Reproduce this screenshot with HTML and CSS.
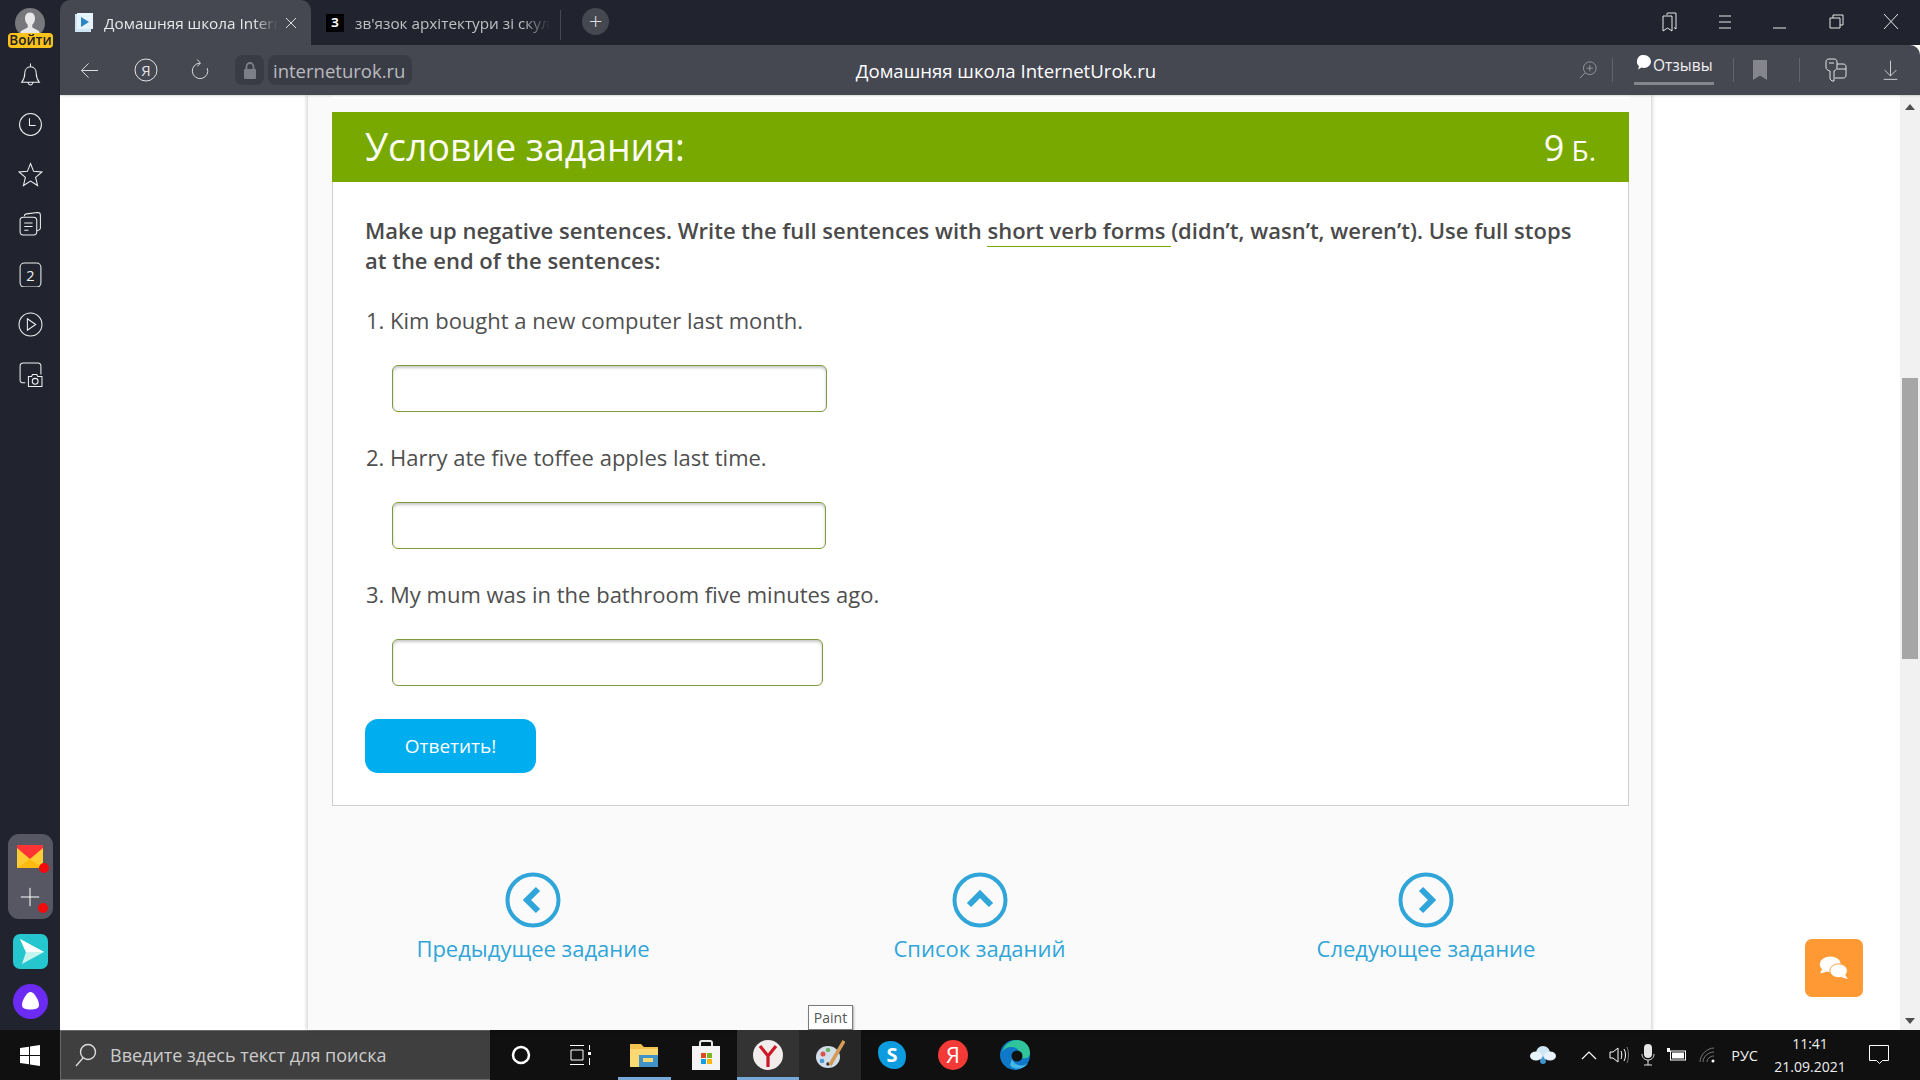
FILE: index.html
```html
<!DOCTYPE html>
<html lang="ru">
<head>
<meta charset="utf-8">
<title>Домашняя школа InternetUrok.ru</title>
<link rel="stylesheet" href="styles.css">
</head>
<body>
<div class="screen">
  <div class="shell">
    <aside class="sidebar">
      <div class="profile">
        <svg width="30" height="30" viewBox="0 0 26 26"><circle cx="13" cy="13" r="13" fill="#77787c"/><path d="M13 4c3 0 4.500 2.500 4.300 5.500-.2 2.500-1.300 4-2.300 5v2.500l5 2.500c1 .5 1.500 1.500 1.500 3.500h-17c0-2 .5-3 1.500-3.500l5-2.500v-2.500c-1-1-2.100-2.500-2.300-5C8.500 6.500 10 4 13 4z" fill="#e8e8e8"/></svg>
        <span class="login">Войти</span>
      </div>
      <div class="side-icons">
        <svg class="si" viewBox="0 0 24 24"><path d="M12 1.500v3M12 4.500c-3.500 0-5.500 3-5.500 6.500 0 4-1 6-3 8.500h17c-2-2.500-3-4.500-3-8.500 0-3.500-2-6.500-5.500-6.500zM9.500 19.500c.5 1.500 1.300 2.500 2.500 2.500s2-1 2.500-2.500"/></svg>
        <svg class="si" viewBox="0 0 24 24"><circle cx="12" cy="12" r="10.500"/><path d="M11 6v7h6"/></svg>
        <svg class="si" viewBox="0 0 24 24"><path d="M12 1.500l3 7.500 8 .6-6.100 5.200 1.900 7.800-6.800-4.200-6.800 4.200 1.900-7.800L1 9.600l8-.6z"/></svg>
        <svg class="si" viewBox="0 0 24 24"><rect x="2" y="5" width="16" height="17" rx="3"/><path d="M6 4c0-1.500 1-2 2-2.200l11-1.300c1.500 0 2.500 1 2.500 2.500v12c0 1.500-1 2.500-3.500 3M6 10.500h8M6 14h8M6 17.500h4"/></svg>
        <svg class="si" viewBox="0 0 24 24"><rect x="2" y="1" width="20" height="23" rx="4"/><text x="12" y="18" class="si-text">2</text></svg>
        <svg class="si" viewBox="0 0 24 24"><circle cx="12" cy="12" r="11"/><path d="M9 6.500l8 5.500-8 5.500z"/></svg>
        <svg class="si" viewBox="0 0 24 24"><path d="M12 1h7c2 0 3 1 3 3v8M2 12V4c0-2 1-3 3-3h7M2 12v5c0 2 1 3 3 3h2M10 14h3l1-2h4l1 2h4v9.500H10z"/><circle cx="16.500" cy="18.500" r="2.800"/></svg>
      </div>
      <div class="side-apps">
        <div class="app-group">
          <span class="app-cell">
            <svg width="30" height="23" viewBox="0 0 26 23"><rect width="26" height="23" fill="#fc3"/><path d="M0 0h26v3L13 14 0 3z" fill="#f33"/><path d="M0 23l13-9 13 9z" fill="#fb1"/></svg>
            <i class="dot"></i>
          </span>
          <span class="app-cell cross">
            <svg width="20" height="20" viewBox="0 0 24 24"><path d="M12 1v22M1 12h22" stroke="#fff" stroke-width="1.200" fill="none"/></svg>
            <i class="dot"></i>
          </span>
        </div>
        <svg class="send" width="35" height="35" viewBox="0 0 35 35"><rect width="35" height="35" rx="7" fill="#26c6ce"/><path d="M7 5l24 13L9 30l4-12z" fill="#c9f5f1"/><path d="M7 5l6 13h18z" fill="#fff"/></svg>
        <svg class="alice" width="35" height="35" viewBox="0 0 35 35"><circle cx="17.500" cy="17.500" r="17.500" fill="#6b2bf2"/><path d="M17.500 8c3.500 0 8.500 8 8.500 13 0 3.500-3.500 4.500-8.500 4.500S9 24.500 9 21c0-5 5-13 8.500-13z" fill="#fff"/></svg>
      </div>
    </aside>

    <div class="browser">
      <header class="tabstrip">
        <div class="tab tab-active">
          <svg width="18" height="20" viewBox="0 0 18 20"><rect x="0" y="1" width="16" height="18" fill="#cfe6f2"/><rect x="2" y="0" width="16" height="16" fill="#e6f3fa"/><path d="M6 4l8 5-8 5z" fill="#2a86c4"/></svg>
          <span class="tab-title">Домашняя школа Intern</span>
          <svg class="tab-close" width="12" height="12" viewBox="0 0 12 12"><path d="M1 1l10 10M11 1L1 11" stroke="#ddd" fill="none"/></svg>
        </div>
        <div class="tab tab-idle">
          <span class="fav-z">З</span>
          <span class="tab-title">зв'язок архітектури зі скул</span>
        </div>
        <span class="tab-div"></span>
        <span class="tab-plus">+</span>
        <div class="win-controls">
          <svg class="wi" viewBox="0 0 20 20"><path d="M8 3l0-1.500c0-.5.500-.5.500-.5H17v16l-2-1.500M4 4h9v15l-4.500-3L4 19z"/></svg>
          <svg class="wi" viewBox="0 0 20 20"><path d="M4 4h12M4 10h12M4 16h12"/></svg>
          <svg class="wi" viewBox="0 0 20 20"><path d="M3 16h13"/></svg>
          <svg class="wi" viewBox="0 0 20 20"><path d="M4 6h10v10H4zM7 6V3h10v10h-3"/></svg>
          <svg class="wi" viewBox="0 0 20 20"><path d="M3 2l14 15M17 2L3 17"/></svg>
        </div>
      </header>

      <nav class="toolbar">
        <div class="tb-left">
          <svg class="ti back" viewBox="0 0 20 20"><path d="M19 10H2M9 2.500L1.500 10 9 17.500"/></svg>
          <svg class="ti ya" viewBox="0 0 24 24"><circle cx="12" cy="12" r="11"/><text x="12" y="18" class="ya-text">Я</text></svg>
          <svg class="ti reload" viewBox="0 0 22 24"><path d="M11 4.500a8.500 8.500 0 1 0 8 5.500M8 .5l3.500 4-3.500 3.500"/></svg>
          <span class="lockbox"><svg width="12" height="17" viewBox="0 0 12 17"><path d="M2.500 7V4.500a3.500 3.500 0 0 1 7 0V7" fill="none" stroke="#7d7f88" stroke-width="1.800"/><rect y="7" width="12" height="10" rx="1" fill="#7d7f88"/></svg></span>
          <span class="urlbox">interneturok.ru</span>
        </div>
        <div class="tb-title">Домашняя школа InternetUrok.ru</div>
        <div class="tb-right">
          <svg class="ti zoomi" viewBox="0 0 22 22"><circle cx="13" cy="9" r="7"/><path d="M9.500 9h7M13 5.500v7M8 14l-6 6"/></svg>
          <span class="tb-div tb-div1"></span>
          <span class="reviews"><svg width="14" height="15" viewBox="0 0 14 15"><path d="M7 0a7 6.500 0 0 1 0 13c-1 0-2-.2-2.500-.4L1 14.500l1-3.300A6.500 6.500 0 0 1 7 0z" fill="#fff"/></svg>Отзывы</span>
          <span class="tb-div tb-div2"></span>
          <svg class="bm" width="14" height="20" viewBox="0 0 14 20"><path d="M0 0h14v20l-7-4.500L0 20z" fill="#85868d"/></svg>
          <span class="tb-div tb-div3"></span>
          <svg class="ti key" viewBox="0 0 24 26"><path d="M2 5c0-2 1-3 3-3h5c2 0 3 1 3 3v5c0 2-1 3-3 4v10H8l-2-2v-8c-3-1-4-2-4-4zM13 7h6c2 0 3 1 3 3v8c0 2-1 3-3 3h-8M13 12h9M5 6h5"/></svg>
          <svg class="ti down" viewBox="0 0 20 24"><path d="M10 1v18M3 12l7 7 7-7M2 23h16"/></svg>
        </div>
      </nav>

      <div class="viewport">
        <main class="page">
          <div class="top-strip"></div>
          <section class="card">
            <div class="card-head">
              <h1>Условие задания:</h1>
              <span class="score"><b>9</b> Б.</span>
            </div>
            <div class="card-body">
              <p class="lead">Make up negative sentences. Write the full sentences with <u>short verb forms </u>(didn’t, wasn’t, weren’t). Use full stops at the end of the sentences:</p>
              <p class="q q1">1. Kim bought a new computer last month.</p>
              <input class="answer a1" type="text" aria-label="Ответ 1">
              <p class="q">2. Harry ate five toffee apples last time.</p>
              <input class="answer a2" type="text" aria-label="Ответ 2">
              <p class="q">3. My mum was in the bathroom five minutes ago.</p>
              <input class="answer a3" type="text" aria-label="Ответ 3">
              <button class="submit" type="button">Ответить!</button>
            </div>
          </section>
          <div class="pager">
            <a class="pg">
              <svg width="56" height="56" viewBox="0 0 56 56"><circle cx="28" cy="28" r="25.500" class="pg-ring"/><path d="M33 17L22 28l11 11" class="pg-arrow"/></svg>
              <span>Предыдущее задание</span>
            </a>
            <a class="pg">
              <svg width="56" height="56" viewBox="0 0 56 56"><circle cx="28" cy="28" r="25.500" class="pg-ring"/><path d="M17 33l11-11 11 11" class="pg-arrow"/></svg>
              <span>Список заданий</span>
            </a>
            <a class="pg">
              <svg width="56" height="56" viewBox="0 0 56 56"><circle cx="28" cy="28" r="25.500" class="pg-ring"/><path d="M23 17l11 11-11 11" class="pg-arrow"/></svg>
              <span>Следующее задание</span>
            </a>
          </div>
        </main>
        <div class="scrollbar">
          <i class="arrow-up"></i>
          <div class="thumb"></div>
          <i class="arrow-down"></i>
        </div>
        <button class="chat" type="button" aria-label="Чат">
          <svg width="30" height="24" viewBox="0 0 32 26"><ellipse cx="12" cy="9" rx="11.500" ry="8.500" fill="#fff"/><path d="M3 14l-2 5 7-2z" fill="#fff"/><ellipse cx="21" cy="16" rx="9.500" ry="7.500" fill="#fff" stroke="#ff9933" stroke-width="1"/><path d="M28 20l3 5-7-2z" fill="#fff"/></svg>
        </button>
        <div class="tooltip">Paint</div>
      </div>
    </div>
  </div>

  <footer class="taskbar">
    <span class="start"><svg width="20" height="21" viewBox="0 0 20 21"><path d="M0 3l9-1.300V10H0zM10 1.500L20 0v10H10zM0 11h9v8.300L0 18zM10 11h10v10l-10-1.500z" fill="#fff"/></svg></span>
    <div class="search">
      <svg width="22" height="24" viewBox="0 0 22 24"><circle cx="13" cy="9" r="7.500" fill="none" stroke="#ddd" stroke-width="1.400"/><path d="M8 15l-7 8" stroke="#ddd" stroke-width="1.400"/></svg>
      <span>Введите здесь текст для поиска</span>
    </div>
    <span class="tb-app cortana"><svg width="20" height="20" viewBox="0 0 20 20"><circle cx="10" cy="10" r="8" fill="none" stroke="#fff" stroke-width="2.500"/></svg></span>
    <span class="tb-app taskview"><svg width="22" height="20" viewBox="0 0 22 20"><path d="M0 .5h14M0 19.500h14M1 5h12v10H1zM19.500 0v5M19.500 13v7" stroke="#fff" fill="none"/><rect x="18" y="7" width="3" height="3" fill="#fff"/></svg></span>
    <span class="tb-app running"><svg width="28" height="24" viewBox="0 0 28 24"><path d="M0 1h11l3 3h14v20H0z" fill="#f2c14e"/><rect y="6" width="28" height="18" fill="#fbd872"/><rect x="9" y="12" width="19" height="12" fill="#3f93c9"/><rect x="13" y="15" width="10" height="4" fill="#fbd872"/></svg></span>
    <span class="tb-app"><svg width="28" height="30" viewBox="0 0 28 30"><path d="M8 7V3c0-1 1-2 2-2h8c1 0 2 1 2 2v4" fill="none" stroke="#e8e8e8" stroke-width="2"/><rect y="6" width="28" height="24" fill="#f4f4f4"/><rect x="9" y="13" width="5" height="5" fill="#e04a22"/><rect x="15" y="13" width="5" height="5" fill="#7db81f"/><rect x="9" y="19" width="5" height="5" fill="#12a0e8"/><rect x="15" y="19" width="5" height="5" fill="#ffb606"/></svg></span>
    <span class="tb-app running active"><svg width="30" height="30" viewBox="0 0 30 30"><circle cx="15" cy="15" r="15" fill="#f2ecec"/><path d="M7 6l8 10 8-10M15 16v11" fill="none" stroke="#cc1a24" stroke-width="3.200"/></svg></span>
    <span class="tb-app hover"><svg width="30" height="30" viewBox="0 0 30 30"><ellipse cx="13" cy="17" rx="12" ry="11" fill="#d2dde8"/><circle cx="8" cy="14" r="2.500" fill="#d9534f"/><circle cx="13" cy="10" r="2.300" fill="#6bb56b"/><circle cx="7" cy="21" r="2.300" fill="#4a9ad4"/><circle cx="13" cy="24" r="1.800" fill="#333"/><path d="M29 1L15 25" stroke="#d39b55" stroke-width="3.500"/></svg></span>
    <span class="tb-app"><svg width="30" height="30" viewBox="0 0 30 30"><path d="M14 1c8 0 15 7 15 15 0 8-4 13-11 13C8 29 1 22 1 12 1 5 6 1 14 1z" fill="#0d9ce0"/><text x="15" y="22" class="sk">S</text></svg></span>
    <span class="tb-app"><svg width="30" height="30" viewBox="0 0 30 30"><circle cx="15" cy="15" r="15" fill="#f33a36"/><text x="15" y="23" class="yt">Я</text></svg></span>
    <span class="tb-app"><svg width="30" height="30" viewBox="0 0 30 30"><circle cx="15" cy="15" r="15" fill="#0f78c9"/><path d="M2 12C5 3 12 0 17 0c8 0 13 6 13 13 0 5-5 6-8 5-3-1-3-3-3-5 0-3-3-6-7-6-5 0-8 2-10 5z" fill="#2fc49a"/><circle cx="17" cy="16" r="5.500" fill="#101010"/><path d="M12 19c2 6 10 9 16 4-3 6-14 8-18 2z" fill="#46b8e8"/></svg></span>
    <div class="tray">
      <svg class="tr-cloud" width="26" height="20" viewBox="0 0 26 20"><ellipse cx="13" cy="8" rx="7" ry="7" fill="#cfe6f5"/><ellipse cx="6" cy="11" rx="6" ry="4.500" fill="#e8f3fb"/><ellipse cx="20" cy="11" rx="6" ry="4.500" fill="#e8f3fb"/><path d="M13 11l3 5a3 3 0 1 1-6 0z" fill="#3d97d3"/></svg>
      <svg class="tr" width="16" height="10" viewBox="0 0 16 10"><path d="M1 9l7-7 7 7" stroke="#fff" fill="none" stroke-width="1.200"/></svg>
      <svg class="tr" width="20" height="18" viewBox="0 0 20 18"><path d="M1 6h3l5-4v14l-5-4H1zM12 5c1 2 1 6 0 8M15 3c2 3 2 9 0 12" stroke="#fff" fill="none"/><path d="M18 1c2 4 2 12 0 16" stroke="#777" fill="none"/></svg>
      <svg class="tr" width="14" height="22" viewBox="0 0 14 22"><rect x="3" y="0" width="8" height="14" rx="4" fill="#e6e6e6"/><path d="M1 10c0 4 3 6 6 6s6-2 6-6M7 16v5M3 21h8" stroke="#e6e6e6" fill="none"/></svg>
      <svg class="tr" width="20" height="14" viewBox="0 0 20 14"><rect x="3.500" y="3" width="15" height="9" fill="none" stroke="#fff"/><rect x="5" y="4.500" width="12" height="6" fill="#fff"/><rect y="0" width="3" height="4" fill="#fff"/></svg>
      <svg class="tr" width="18" height="16" viewBox="0 0 18 16"><path d="M1 15C1 8 8 1 15 1M4 15c0-5 5-10 11-10M8 15c0-3 3-6 7-6" stroke="#777" fill="none"/><circle cx="14" cy="14" r="1.500" fill="#fff"/></svg>
      <span class="lang">РУС</span>
      <div class="clock"><span>11:41</span><span>21.09.2021</span></div>
      <svg class="notif" width="20" height="20" viewBox="0 0 20 20"><path d="M.5.500h19v15h-6l-3 3-3-3h-7z" fill="none" stroke="#fff"/></svg>
    </div>
  </footer>
</div>
</body>
</html>
```
FILE: styles.css
```css
* { box-sizing: border-box; }
html, body { margin: 0; height: 100%; overflow: hidden; }
body { font-family: "Open Sans", "Noto Sans", sans-serif; color: #4a4a4a; }
.screen { width: 1920px; height: 1080px; display: flex; flex-direction: column; }
.shell { flex: 1; min-height: 0; display: flex; }

/* Sidebar */
.sidebar { width: 60px; flex: none; background: #21242e; display: flex; flex-direction: column; align-items: center; padding-top: 8px; padding-bottom: 11px; }
.profile { position: relative; height: 40px; width: 60px; display: flex; justify-content: center; }
.login { position: absolute; left: 8px; top: 25px; width: 45px; height: 15px; border-radius: 4px; background: #fdc31c; color: #222; font: 600 13.500px/15px "Open Sans", sans-serif; text-align: center; }
.side-icons { display: flex; flex-direction: column; align-items: center; gap: 25px; margin-top: 14px; }
.si { width: 25px; height: 25px; fill: none; stroke: #eef0f2; stroke-width: 1; }
.si-text { font: 400 14px "Open Sans", sans-serif; fill: #eef0f2; stroke: none; text-anchor: middle; }
.side-apps { margin-top: auto; display: flex; flex-direction: column; align-items: center; }
.app-group { width: 45px; height: 85px; background: #565762; border-radius: 11px; display: flex; flex-direction: column; align-items: center; padding-top: 11px; gap: 19px; }
.app-cell { position: relative; display: block; height: 23px; line-height: 0; }
.cross { height: 20px; }
.dot { position: absolute; right: -4px; bottom: -5px; width: 10px; height: 10px; border-radius: 50%; background: #f00c0c; }
.cross .dot { right: -8px; bottom: -6px; }
.send { margin-top: 15px; }
.alice { margin-top: 15px; }

/* Browser chrome */
.browser { flex: 1; min-width: 0; display: flex; flex-direction: column; }
.tabstrip { height: 45px; background: #21242e; display: flex; align-items: flex-start; position: relative; }
.tab { height: 45px; display: flex; align-items: center; color: #e8e8ea; font-size: 15.300px; }
.tab-active { width: 251px; background: #454751; border-radius: 10px 10px 0 0; padding-left: 15px; }
.tab-title { display: block; margin-left: 11px; white-space: nowrap; -webkit-mask-image: linear-gradient(90deg, #000 86%, transparent); mask-image: linear-gradient(90deg, #000 86%, transparent); }
.tab-active .tab-title { width: 174px; }
.tab-close { margin-left: 7px; flex: none; }
.tab-idle { width: 237px; padding-left: 15px; color: #bfc0c5; }
.tab-idle .tab-title { width: 196px; margin-left: 11px; }
.fav-z { width: 18px; height: 18px; background: #000; color: #fff; font: 700 12px/18px "Open Sans", sans-serif; text-align: center; flex: none; }
.tab-div { width: 1px; height: 30px; background: #454751; margin-top: 10px; margin-left: 12px; }
.tab-plus { width: 27px; height: 27px; border-radius: 50%; background: #454751; color: #ddd; font: 300 24px/25px "Open Sans", sans-serif; text-align: center; margin-left: 21px; margin-top: 8px; }
.win-controls { margin-left: auto; margin-right: 19px; margin-top: 12px; display: flex; gap: 35.500px; }
.wi { width: 20px; height: 20px; fill: none; stroke: #e8e8ea; stroke-width: 1; }

.toolbar { height: 50px; background: #454751; display: flex; align-items: center; position: relative; border-radius: 0 10px 0 0; box-shadow: 0 1px 2px rgba(0,0,0,.15); z-index: 1; }
.tb-left { display: flex; align-items: center; padding-left: 20px; }
.ti { fill: none; stroke: #e4e5e8; stroke-width: 1; }
.back { width: 19px; height: 19px; }
.ya { width: 24px; height: 24px; margin-left: 35px; }
.ya-text { font: 400 15px "Open Sans", sans-serif; fill: #e4e5e8; stroke: none; text-anchor: middle; }
.reload { width: 20px; height: 22px; margin-left: 32px; }
.lockbox { width: 29px; height: 30px; margin-left: 25px; background: #3a3c45; border-radius: 8px; display: flex; align-items: center; justify-content: center; }
.urlbox { margin-left: 4px; height: 30px; width: 144px; background: #3a3c45; border-radius: 8px; color: #b9bac0; font-size: 18.500px; line-height: 31px; padding-left: 5px; white-space: nowrap; }
.tb-title { position: absolute; left: 946px; transform: translateX(-50%); color: #fff; font-size: 18.600px; white-space: nowrap; }
.tb-right { margin-left: auto; display: flex; align-items: center; padding-right: 21px; }
.zoomi { width: 20px; height: 20px; stroke: #9a9ba1; }
.tb-div { width: 1px; height: 24px; background: #62646d; }
.tb-div1 { margin-left: 14px; }
.reviews { margin-left: 21px; width: 80px; height: 30px; display: flex; align-items: flex-start; gap: 2px; color: #f0f0f2; font-size: 15.500px; line-height: 20px; border-bottom: 3px solid #85868d; padding-left: 3px; white-space: nowrap; margin-top: 0; }
.tb-div2 { margin-left: 19px; }
.bm { margin-left: 19px; }
.tb-div3 { margin-left: 32px; }
.key { width: 24px; height: 26px; margin-left: 24px; }
.down { width: 17px; height: 24px; margin-left: 34px; }

/* Page */
.viewport { flex: 1; min-height: 0; display: flex; position: relative; background: #fff; }
.page { flex: 1; min-width: 0; margin: 0 249px 0 248px; background: #fafafa; box-shadow: -2px 0 3px rgba(0,0,0,.14), 2px 0 3px rgba(0,0,0,.14); padding: 0 22px 0 24px; overflow: hidden; }
.top-strip { height: 4px; margin-bottom: 13px; background: #fff; }
.card { background: #fff; border: 1px solid #cfcfcf; border-top: 0; height: 694px; }
.card-head { height: 70px; background: #78a900; color: #fdfdf5; display: flex; align-items: center; justify-content: space-between; padding: 0 33px; margin: 0 -1px; }
.card-head h1 { margin: 0; font-size: 37.400px; font-weight: 400; line-height: 70px; }
.score { font-size: 28px; }
.score b { font-size: 36px; font-weight: 400; }
.card-body { padding: 33px 32px 0; }
.lead { margin: 0; font-size: 22px; line-height: 30px; font-weight: 600; color: #4a4a4a; }
.lead u { text-decoration: none; border-bottom: 1px solid #78a900; padding-bottom: 1px; }
.q { margin: 0; padding-left: 1px; font-size: 22px; line-height: 30px; color: #4f4f4f; }
.q1 { margin-top: 30px; }
.answer { display: block; height: 47px; margin: 30px 0 30px 27px; border: 1px solid #7d9c3b; border-radius: 6px; background: #fff; box-shadow: inset 0 2px 3px rgba(0,0,0,.22); outline: 0; }
.a1 { width: 435px; }
.a2 { width: 434px; }
.a3 { width: 431px; margin-bottom: 33px; }
.submit { display: block; width: 171px; height: 54px; border: 0; border-radius: 13px; background: #00adef; color: #fff; font: 400 19px "Open Sans", sans-serif; }
.pager { display: flex; justify-content: space-between; padding-top: 66px; margin-left: 83px; margin-right: 85px; }
.pg { display: flex; flex-direction: column; align-items: center; width: 236px; color: #2fa5d9; font-size: 22px; line-height: 30px; gap: 5px; }
.pg span { white-space: nowrap; }
.pg-ring { fill: none; stroke: #2fa5d9; stroke-width: 4; }
.pg-arrow { fill: none; stroke: #2fa5d9; stroke-width: 6; }

.scrollbar { width: 20px; background: #f1f1f1; display: flex; flex-direction: column; align-items: center; position: relative; }
.thumb { position: absolute; left: 2px; top: 283px; width: 16px; height: 281px; background: #a6a6a6; }
.arrow-up, .arrow-down { position: absolute; left: 5px; width: 0; height: 0; border-left: 5px solid transparent; border-right: 5px solid transparent; }
.arrow-up { top: 9px; border-bottom: 6px solid #505050; }
.arrow-down { bottom: 6px; border-top: 6px solid #505050; }

.chat { position: absolute; left: 1745px; top: 844px; width: 58px; height: 58px; border: 0; border-radius: 7px; background: #ff9933; padding: 0; display: flex; align-items: center; justify-content: center; }
.tooltip { position: absolute; left: 748px; bottom: 0; width: 45px; height: 25px; background: #fff; border: 1px solid #7b7b7b; box-shadow: 1px 1px 2px rgba(0,0,0,.3); color: #555; font-size: 14px; line-height: 23px; text-align: center; }

/* Taskbar */
.taskbar { height: 50px; background: #101010; display: flex; align-items: stretch; color: #fff; }
.start { width: 60px; display: flex; align-items: center; justify-content: center; }
.search { width: 430px; background: #3f3f3f; border-top: 1px solid #6a6a6a; border-bottom: 1px solid #6a6a6a; border-left: 1px solid #6a6a6a; display: flex; align-items: center; padding-left: 14px; gap: 13px; color: #ccc; font-size: 18px; }
.tb-app { width: 61.800px; display: flex; align-items: center; justify-content: center; position: relative; }
.taskview svg { margin-right: 4px; }
.running::after { content: ""; position: absolute; left: 4px; right: 4px; bottom: 0; height: 3px; background: #76a9d8; }
.active { background: #333; }
.active::after { left: 0; right: 0; }
.hover { background: #272727; }
.sk { font: 700 20px "Open Sans", sans-serif; fill: #fff; text-anchor: middle; }
.yt { font: 400 22px "Open Sans", sans-serif; fill: #fff; text-anchor: middle; }
.tray { margin-left: auto; display: flex; align-items: center; padding-right: 31px; }
.tr-cloud { margin-right: 25px; }
.tr { margin-right: 12px; flex: none; }
.lang { font-size: 14.500px; margin-left: 2px; color: #eee; white-space: nowrap; }
.clock { width: 74px; margin-left: 15px; display: flex; flex-direction: column; align-items: center; font-size: 14px; line-height: 23px; color: #eee; white-space: nowrap; }
.notif { margin-left: 22px; }
```
